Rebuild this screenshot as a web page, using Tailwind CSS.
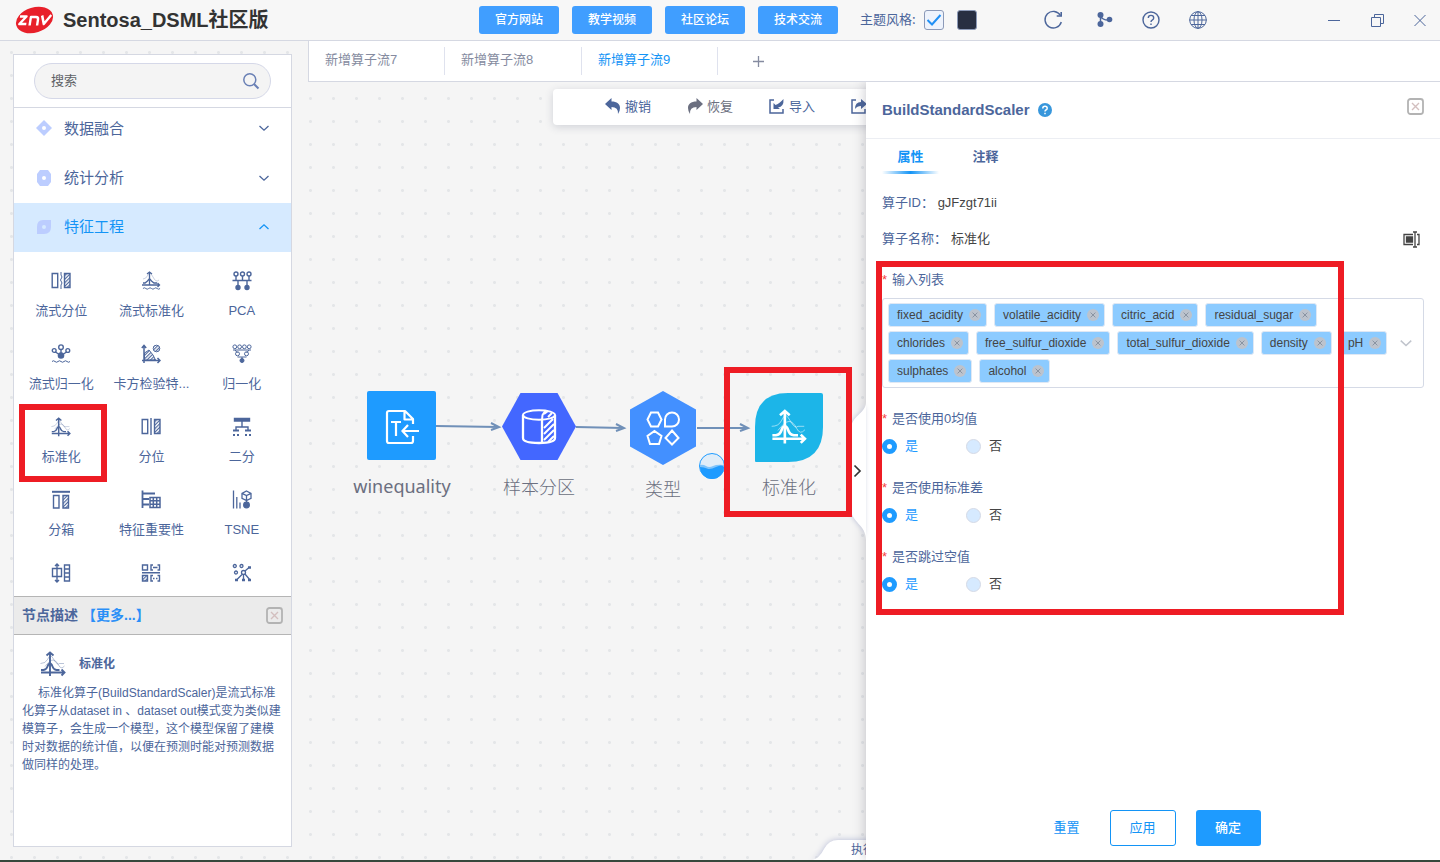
<!DOCTYPE html>
<html lang="zh-CN">
<head>
<meta charset="utf-8">
<meta name="viewport" content="width=device-width, initial-scale=1">
<title>Sentosa_DSML社区版</title>
<script src="https://cdn.jsdelivr.net/npm/@tailwindcss/browser@4"></script>
</head>
<body class="flex h-screen flex-col overflow-hidden bg-[#f5f5f5] font-['Liberation_Sans','Noto_Sans_CJK_SC',sans-serif] text-[13px] text-[#4c669b]">

<svg class="absolute size-0" aria-hidden="true">
  <defs>
    <pattern id="hatch" width="2.500" height="2.500" patternUnits="userSpaceOnUse" patternTransform="rotate(45)"><path d="M0 0V3" stroke="#4c669b" stroke-width="2.200"/></pattern>
    <symbol id="bell" viewBox="0 0 26 26">
      <path d="M1 21.500H24M21.500 18.500l3 3-3 3M10 25V2M6.500 4.500 10 1.500l3.500 3" fill="none" stroke="currentColor" stroke-width="1.900"/>
      <path d="M1 19h2.500Q6.500 18.500 7.500 15.500T10 12.500t2.500 3 4 3.500h3" fill="none" stroke="currentColor" stroke-width="1.900"/>
      <path d="M.5 12.500q5 0 7-4T10.500 4.500t4 5 5 3h4.500M5 15.500Q10 9 13 9t5.500 5 6 1" fill="none" stroke="currentColor" stroke-width=".6" opacity=".65"/>
    </symbol>
    <symbol id="close-box" viewBox="0 0 17 17">
      <rect x="1" y="1" width="15" height="15" rx="2.500" fill="none" stroke="#b3b3b3" stroke-width="1.800"/>
      <path d="m5 5 7 7m0-7-7 7" stroke="#d3bfbf" stroke-width="1.400"/>
    </symbol>
    <symbol id="chev" viewBox="0 0 12 12"><path d="m1.500 4 4.500 4.200L10.500 4" fill="none" stroke="currentColor" stroke-width="1.300"/></symbol>
    <symbol id="tagx" viewBox="0 0 12 12"><circle cx="6" cy="6" r="6" fill="#bcc3cd"/><path d="m3.600 3.600 4.800 4.800m0-4.800L3.600 8.400" stroke="#8a94a2" stroke-width="1"/></symbol>
    <symbol id="waves" viewBox="0 0 20 3"><path d="M1 1.500q1.500-1.500 3 0t3 0 3 0 3 0 3 0 3 0" fill="none" stroke="currentColor" stroke-width="1"/></symbol>
  </defs>
</svg>

<header class="flex h-[41px] shrink-0 items-center border-b border-[#d5d8e2] bg-[#f7f7f7]">
  <div class="flex w-[479px] items-center gap-[9px] pl-[14px]">
    <svg class="h-7 w-10" viewBox="0 0 40 28" role="img" aria-label="znv">
      <ellipse cx="20.500" cy="14" rx="19" ry="12.500" transform="rotate(-17 20.500 14)" fill="#e8202a"/>
      <g fill="none" stroke="#fff" stroke-width="2.400" stroke-linejoin="round" transform="translate(1 1) skewX(-9)">
        <path d="M6.500 9.500h6.500l-6 7.500h7"/><path d="M17.500 18.500V10h5q2.500 0 2.500 2.500v6"/><path d="m28.500 8.500 3 8.500 6-9"/>
      </g>
    </svg>
    <h1 class="text-xl font-bold whitespace-nowrap text-[#333]">Sentosa_DSML社区版</h1>
  </div>
  <nav class="flex gap-[13px] text-xs font-medium text-white">
    <a href="#" class="flex h-7 w-20 items-center justify-center rounded-[3px] bg-[#409eff]">官方网站</a>
    <a href="#" class="flex h-7 w-20 items-center justify-center rounded-[3px] bg-[#409eff]">教学视频</a>
    <a href="#" class="flex h-7 w-20 items-center justify-center rounded-[3px] bg-[#409eff]">社区论坛</a>
    <a href="#" class="flex h-7 w-20 items-center justify-center rounded-[3px] bg-[#409eff]">技术交流</a>
  </nav>
  <div class="ml-[22px] flex items-center">
    <label for="theme-light" class="pb-0.5 font-['Noto_Sans_CJK_SC']">主题风格:</label>
    <span class="relative ml-2 size-5">
      <input id="theme-light" type="checkbox" checked class="size-5 appearance-none rounded-[3px] border border-[#8c9ab8] bg-[#eef3fc]">
      <svg class="pointer-events-none absolute inset-0 size-5" viewBox="0 0 20 20"><path d="m3.500 10 4.500 4.500 8.500-9.500" fill="none" stroke="#2090f5" stroke-width="2"/></svg>
    </span>
    <button type="button" aria-label="深色主题" class="ml-[13px] size-5 rounded-[3px] border border-[#8c9ab8] bg-[#282f42]"></button>
  </div>
  <div class="ml-[66px] flex items-center gap-[27px]">
    <button type="button" aria-label="刷新"><svg class="size-5" viewBox="0 0 20 20" fill="none" stroke="currentColor" stroke-width="1.400"><path d="M17.500 5.500A8.300 8.300 0 1 0 18.300 12"/><path d="M18.200 2v4h-4.500" stroke-width="1.600"/></svg></button>
    <button type="button" aria-label="分支" class="ml-1"><svg class="size-5" viewBox="0 0 20 20"><path d="M6.500 4.500v11M6.500 6q2 4.500 9 4" fill="none" stroke="currentColor" stroke-width="1.500"/><circle cx="6.500" cy="5" r="3" fill="currentColor"/><circle cx="6.500" cy="14" r="3" fill="currentColor"/><circle cx="15.500" cy="9.500" r="2.800" fill="currentColor"/></svg></button>
    <button type="button" aria-label="帮助"><svg class="size-5" viewBox="0 0 20 20" fill="none" stroke="currentColor" stroke-width="1.400"><circle cx="10" cy="10" r="8"/><path d="M7.300 8q0-2.600 2.700-2.600T12.700 8q0 1.400-1.500 2.100-1.200.6-1.200 2"/><path d="M10 13.400v1.500"/></svg></button>
    <button type="button" aria-label="语言"><svg class="size-5" viewBox="0 0 20 20" fill="none" stroke="currentColor" stroke-width="1"><circle cx="10" cy="10" r="8.300"/><ellipse cx="10" cy="10" rx="4" ry="8.300"/><path d="M10 1.500v17M1.500 10h17M3 5.500h14M3 14.500h14"/></svg></button>
  </div>
  <div class="ml-auto flex items-center gap-[27px] pr-3">
    <button type="button" aria-label="最小化"><svg class="size-4" viewBox="0 0 16 16"><path d="M2 8.500h12" stroke="currentColor" stroke-width="1"/></svg></button>
    <button type="button" aria-label="还原"><svg class="size-4" viewBox="0 0 16 16" fill="none" stroke="currentColor" stroke-width="1"><path d="M2.500 5.500h9v9h-9zM5.500 5.500v-3h9v9h-3"/></svg></button>
    <button type="button" aria-label="关闭"><svg class="size-4" viewBox="0 0 16 16"><path d="m2.500 3 11 11m0-11-11 11" stroke="currentColor" stroke-width="1"/></svg></button>
  </div>
</header>

<div class="flex min-h-0 flex-1 bg-[radial-gradient(circle,#e4e6e8_1px,transparent_2px)] bg-[length:23px_23px]">

  <aside class="flex w-[308px] shrink-0 flex-col py-[13px] pr-4 pl-[13px]">
    <div class="flex min-h-0 flex-1 flex-col border border-[#d5d8e2] bg-white">
      <div class="shrink-0 border-b border-[#d5d8e2] px-5 py-2">
        <div class="flex h-9 items-center rounded-full border border-[#d5d8e8] bg-[#f4f4f4] pr-[10px] pl-4">
          <input type="text" aria-label="搜索" placeholder="搜索" class="min-w-0 flex-1 bg-transparent outline-none placeholder:text-[#606266]">
          <svg class="size-[18px] text-[#6a80b5]" viewBox="0 0 18 18" fill="none" stroke="currentColor" stroke-width="1.500"><circle cx="7.800" cy="7.800" r="6"/><path d="m12 12 4.500 4.500" stroke-width="2"/></svg>
        </div>
      </div>

      <div class="flex min-h-0 flex-1 flex-col overflow-hidden">
        <button type="button" class="flex h-[46px] shrink-0 items-center gap-3 pr-[21px] pb-[6px] pl-[22px] text-[15px] font-['Noto_Sans_CJK_SC']">
          <svg class="size-4" viewBox="0 0 16 16"><path fill-rule="evenodd" d="M8 0l8 8-8 8-8-8zM8 6a2 2 0 1 0 0 4 2 2 0 0 0 0-4z" fill="#bccdff"/></svg>
          <span class="flex-1 text-left">数据融合</span><svg class="size-3"><use href="#chev"/></svg>
        </button>
        <button type="button" class="flex h-[49px] shrink-0 items-center gap-3 pr-[21px] pb-[2px] pl-[22px] text-[15px] font-['Noto_Sans_CJK_SC']">
          <svg class="size-4" viewBox="0 0 16 16"><path fill-rule="evenodd" d="M4 0h8l3 4v8l-3 4H4l-3-4V4zM8 6a2 2 0 1 0 0 4 2 2 0 0 0 0-4z" fill="#bccdff"/></svg>
          <span class="flex-1 text-left">统计分析</span><svg class="size-3"><use href="#chev"/></svg>
        </button>
        <button type="button" class="flex h-[49px] shrink-0 items-center gap-3 bg-[#d6eaff] pr-[21px] pb-[2px] pl-[22px] text-[15px] font-['Noto_Sans_CJK_SC'] text-[#1394f6]">
          <svg class="size-4" viewBox="0 0 16 16"><path fill-rule="evenodd" d="M7 1h8v7q0 7-7 7H1V8q0-7 6-7zM8 6a2 2 0 1 0 0 4 2 2 0 0 0 0-4z" fill="#bccdff"/></svg>
          <span class="flex-1 text-left">特征工程</span><svg class="size-3 rotate-180"><use href="#chev"/></svg>
        </button>

        <ul class="grid grid-cols-3 pt-[9px] pr-1 pl-[2px] text-[13px] leading-5">
          <li class="flex h-[73px] flex-col items-center gap-[10px] pt-[10px]">
            <svg class="size-5" viewBox="0 0 20 20" fill="none" stroke="currentColor" stroke-width="1.400"><path d="M1.200 2.500h5.500v14H1.200z"/><path d="M13.500 2.500h5.500v14h-5.500z" fill="url(#hatch)"/><path d="M10 1v3l1 2-1.500 3 1.500 3-1 2v4" stroke-width="1"/></svg>流式分位</li>
          <li class="flex h-[73px] flex-col items-center gap-[10px] pt-[10px]">
            <svg class="size-5" viewBox="0 0 20 20" fill="none" stroke="currentColor" stroke-width="1.300"><path d="M8.500 14V1M6 3l2.500-2L11 3M1 14h17.500M16.500 12l2 2-2 2M2 12h2l2.500-2 2-2.500 2 2.500 2.500 2h3"/><path d="M2 8q3 0 5-4t5 2 6 3" stroke-width=".5" opacity=".6"/><use href="#waves" x="1" y="16" width="19" height="3"/></svg>流式标准化</li>
          <li class="flex h-[73px] flex-col items-center gap-[10px] pt-[10px]">
            <svg class="size-5" viewBox="0 0 20 20" fill="none" stroke="currentColor" stroke-width="1.400"><circle cx="4" cy="3" r="2"/><circle cx="10.500" cy="3" r="2"/><circle cx="17" cy="3" r="2"/><path d="M4 5v4M10.500 5v4M17 5v4M.5 9.500h19M6 10v5M15 10v5"/><g fill="currentColor"><circle cx="6" cy="16.500" r="2"/><circle cx="15" cy="16.500" r="2"/></g></svg>PCA</li>

          <li class="flex h-[73px] flex-col items-center gap-[10px] pt-[10px]">
            <svg class="size-5" viewBox="0 0 20 20" fill="none" stroke="currentColor" stroke-width="1.400"><circle cx="10" cy="3.200" r="2.300"/><circle cx="3.200" cy="6.500" r="1.900"/><circle cx="16.800" cy="6.500" r="1.900"/><path d="M10 5.500v5M4.500 8l3 2M15.500 8l-3 2"/><circle cx="10" cy="11.500" r="2.600" fill="currentColor"/><use href="#waves" x="0" y="16" width="20" height="3"/></svg>流式归一化</li>
          <li class="flex h-[73px] flex-col items-center gap-[10px] pt-[10px]">
            <svg class="size-5" viewBox="0 0 20 20" fill="none" stroke="currentColor" stroke-width="1.500"><path d="M3 19V1.500M.8 4 3 1.500 5.200 4M1 16.500h18M16.500 14l2.500 2.500-2.500 2.500"/><path d="M3.500 16V9L8 6l4 5 2.500 5z" stroke-width="1" fill="url(#hatch)"/><circle cx="15.500" cy="4.500" r="3.300" stroke-width="1" fill="url(#hatch)"/></svg>卡方检验特...</li>
          <li class="flex h-[73px] flex-col items-center gap-[10px] pt-[10px]">
            <svg class="size-5" viewBox="0 0 20 20" fill="none" stroke="currentColor" stroke-width="1"><circle cx="2.800" cy="2.800" r="1.900"/><circle cx="7.600" cy="2.800" r="1.900"/><circle cx="12.400" cy="2.800" r="1.900"/><circle cx="17.200" cy="2.800" r="1.900"/><path d="M1 6h18M3 6l2.500 3M17 6l-2.500 3M5.500 13h9M10 13v2"/><circle cx="5.500" cy="9.800" r="2"/><circle cx="14.500" cy="9.800" r="2"/><circle cx="10" cy="16.500" r="2" fill="currentColor"/></svg>归一化</li>

          <li class="relative flex h-[73px] flex-col items-center gap-[10px] pt-[10px]">
            <svg class="size-5"><use href="#bell"/></svg>标准化
            <span class="pointer-events-none absolute -top-[3px] left-[3px] h-[78px] w-[88px] border-[6px] border-[#ee1c24]"></span></li>
          <li class="flex h-[73px] flex-col items-center gap-[10px] pt-[10px]">
            <svg class="size-5" viewBox="0 0 20 20" fill="none" stroke="currentColor" stroke-width="1.400"><path d="M1.200 2.500h5.500v14H1.200z"/><path d="M13.500 2.500h5.500v14h-5.500z" fill="url(#hatch)"/><path d="M10 1v17"/></svg>分位</li>
          <li class="flex h-[73px] flex-col items-center gap-[10px] pt-[10px]">
            <svg class="size-5" viewBox="0 0 20 20" fill="none" stroke="currentColor" stroke-width="1.400"><path d="M2.500 1.500h15v2.500h-15z" fill="currentColor"/><path d="M10 4v6M4 13V10h12v3"/><path d="M1 13.500h6M13 13.500h6" stroke-width="2.200"/><path d="M1 18h2M5 18h2M13 18h2M17 18h2" stroke-width="2"/></svg>二分</li>

          <li class="flex h-[73px] flex-col items-center gap-[10px] pt-[10px]">
            <svg class="size-5" viewBox="0 0 20 20" fill="none" stroke="currentColor" stroke-width="1.400"><path d="M1 1.800h18" stroke-width="2"/><path d="M2.500 5.500h5.500v12.500H2.500z"/><path d="M12 5.500h5.500v12.500H12z" fill="url(#hatch)"/></svg>分箱</li>
          <li class="flex h-[73px] flex-col items-center gap-[10px] pt-[10px]">
            <svg class="size-5" viewBox="0 0 20 20" fill="none" stroke="currentColor" stroke-width="1.500"><path d="M1.500.5v17.500M1.500 3.500H14M1.500 9H8M1.500 14.500H8" stroke-width="1.800"/><path d="M9 7.500h10v10H9zM12.300 7.500v10M15.700 7.500v10M9 10.800h10M9 14.200h10"/></svg>特征重要性</li>
          <li class="flex h-[73px] flex-col items-center gap-[10px] pt-[10px]">
            <svg class="size-5" viewBox="0 0 20 20" fill="none" stroke="currentColor" stroke-width="1.300"><path d="M1.500.5v18M4.800 7v11.500M8 12.500v6"/><path d="m14.500 1 4.500 2.300v5L14.500 10.500 10 8.300v-5zM10 3.300l4.500 2.300L19 3.300M14.500 5.600v7"/><circle cx="14.500" cy="15" r="2.800" fill="currentColor"/></svg>TSNE</li>

          <li class="flex h-[73px] flex-col items-center gap-[10px] pt-[10px]">
            <svg class="size-5" viewBox="0 0 20 20" fill="none" stroke="currentColor" stroke-width="1.400"><path d="M1.500 5.500h9v8h-9zM6 1v18M4 3l2-2 2 2M4 17l2 2 2-2M13.500 2h5v16h-5zM13.500 6h5M13.500 10h5M13.500 14h5"/></svg></li>
          <li class="flex h-[73px] flex-col items-center gap-[10px] pt-[10px]">
            <svg class="size-5" viewBox="0 0 20 20" fill="none" stroke="currentColor" stroke-width="1.400"><path d="M1.500 2h5v5h-5zM1 9.700h18M12 2h-2v5h2M16.500 2h2v5h-2M12 4.500h4.500M12 12.500h-2V18h2M16.500 12.500h2V18h-2M12 15.500h1.500M15 15.500h1.500"/><path d="M1.500 12.500h5V18h-5z" fill="url(#hatch)"/></svg></li>
          <li class="flex h-[73px] flex-col items-center gap-[10px] pt-[10px]">
            <svg class="size-5" viewBox="0 0 20 20" fill="none" stroke="currentColor" stroke-width="1.300"><circle cx="2.800" cy="3" r="1.500"/><circle cx="9.500" cy="3" r="1.500"/><circle cx="4" cy="9.500" r="1.500"/><circle cx="11.500" cy="9.500" r="2"/><path d="m13 8 4-3.500M10 11.500 5 16.500M11.500 11.500v5M13 11l5 6"/><path d="M16 4.500h3M3 17h3M10 17h3M16 17h3" stroke-width="2.400"/></svg></li>
        </ul>
      </div>

      <section class="shrink-0">
        <div class="flex h-[39px] items-center border-y border-[#b5b5b5] bg-[#ebebeb] pr-2 pl-2 text-sm font-bold">
          <h2 class="pb-[2px]">节点描述</h2><a href="#" class="ml-1 pb-[2px] text-[#2a8ff7]">【更多...】</a>
          <button type="button" aria-label="关闭描述" class="ml-auto"><svg class="size-[17px]"><use href="#close-box"/></svg></button>
        </div>
        <div class="h-[211px] px-2 pt-4">
          <h3 class="flex items-center gap-[13px] pl-[18px] text-xs font-bold"><svg class="size-[26px]"><use href="#bell"/></svg>标准化</h3>
          <p class="mt-[7px] indent-4 text-xs leading-[18px]">标准化算子(BuildStandardScaler)是流式标准化算子从dataset in 、dataset out模式变为类似建模算子，会生成一个模型，这个模型保留了建模时对数据的统计值，以便在预测时能对预测数据做同样的处理。</p>
        </div>
      </section>
    </div>
  </aside>

  <main class="flex min-w-0 flex-1 flex-col">
    <div role="tablist" class="flex h-[41px] shrink-0 items-center border-b border-l border-[#d5d8e2] bg-white text-[#858ba0]">
      <button type="button" role="tab" class="h-7 w-[136px] border-r border-[#dfe2ee] pl-4 text-left"><span class="block pb-[2px]">新增算子流7</span></button>
      <button type="button" role="tab" class="h-7 w-[137px] border-r border-[#dfe2ee] pl-4 text-left"><span class="block pb-[2px]">新增算子流8</span></button>
      <button type="button" role="tab" aria-selected="true" class="h-7 w-[136px] border-r border-[#dfe2ee] pl-4 text-left text-[#1394f6]"><span class="block pb-[2px]">新增算子流9</span></button>
      <button type="button" aria-label="新增" class="ml-[34px]"><svg class="size-3" viewBox="0 0 12 12"><path d="M6.500 1v11M1 6.500h11" stroke="#858ba0" stroke-width="1.300"/></svg></button>
    </div>

    <div class="relative min-h-0 flex-1 overflow-hidden">
      <!-- flow canvas: edges, then nodes -->
      <svg class="absolute inset-0 size-full" fill="none" stroke="#7090b8" stroke-width="2">
        <path d="M128 344 190 345M183 341l8 4-8 3M268 345l47 1M308 342l8 4-8 3M389 346h50M432 342l8 4-8 3"/>
      </svg>
      <div class="absolute top-[309px] left-[34px] flex w-[120px] flex-col items-center font-['Noto_Sans'] text-lg text-[#6b6f80]">
        <svg class="h-[70px] w-[70px]" viewBox="0 0 70 70" fill="none" stroke="#fff" stroke-width="2.200"><rect width="69" height="69" x="0" y="0" rx="2" fill="#1e9bff" stroke="none"/><path d="M46 45v5q0 2-2 2H22q-2 0-2-2V22q0-2 2-2h16l8 8v5M37.500 20v8.500H46" stroke-linejoin="round"/><path d="M24 31h10M29 31v14M35 40h17M41 34l-5.500 6 5.500 6"/></svg>
        <span class="mt-[11px]">winequality</span>
      </div>
      <div class="absolute top-[309px] left-[171px] flex w-[120px] flex-col items-center font-['Noto_Sans_CJK_SC'] text-lg font-light text-[#6b6f80]">
        <svg class="h-[70px] w-[74px]" viewBox="0 0 74 70" fill="none" stroke="#fff" stroke-width="2"><path d="M18.500 2h37L74 35.500 55.500 69h-37L0 35.500z" fill="#4367ff" stroke="none"/><path d="M21 24v23q0 5 16 5t16-5V24M40 29v23" stroke-width="2.300"/><ellipse cx="37" cy="24" rx="16" ry="4.800"/><path d="m40 29 .5-5 3-4.500M42 23l4-3M46 26l4-4M42 37l9-9M42 43l10-10M42 49l10-10M46 51l6-6"/></svg>
        <span class="mt-[11px]">样本分区</span>
      </div>
      <div class="absolute top-[309px] left-[295px] flex w-[120px] flex-col items-center font-['Noto_Sans_CJK_SC'] text-lg font-light text-[#6b6f80]">
        <svg class="h-[74px] w-[68px]" viewBox="0 0 68 74" fill="none" stroke="#fff" stroke-width="2"><path d="m34 0 33 18.500v37L34 74 1 55.500v-37z" fill="#4390ff" stroke="none"/><path d="m18.500 28.500 3.500-7h7l3.500 7-3.500 7h-7zM25.500 40l7 5-2.500 8h-9l-2.500-8zM43 39.500l6.500 7.500-6.500 6.500-6.500-6.500zM36 35.500v-7a7 7 0 1 1 7 7z"/></svg>
        <span class="mt-[9px]">类型</span>
      </div>
      <svg class="absolute top-[371px] left-[391px] size-[26px]" viewBox="0 0 26 26"><circle cx="13" cy="13" r="12.500" fill="#e0edf8" stroke="#1e9bff"/><path d="M1 12q3-1 6 1t7 0 11-1v1a12 12 0 0 1-24 0z" fill="#7fc4fb"/><path d="M1 14q4 0 7 1.500t9-1.500 8 0a12 12 0 0 1-24 0z" fill="#1e9bff"/></svg>
      <div class="absolute top-[311px] left-[421px] flex w-[120px] flex-col items-center font-['Noto_Sans_CJK_SC'] text-lg font-light text-[#6b6f80]">
        <svg class="h-[70px] w-[70px]" viewBox="0 0 70 70" color="#fff"><path d="M34 0h33q2 0 2 2v32q0 35-35 35H2q-1 0-1-1V34Q1 0 34 0z" fill="#1cb5e8"/><use href="#bell" x="17" y="16" width="36" height="36"/></svg>
        <span class="mt-[9px]">标准化</span>
      </div>

      <!-- toolbar over the canvas -->
      <div class="absolute top-[7px] right-0 left-[245px] flex h-9 items-center gap-9 rounded bg-white pb-[2px] pl-[52px] font-['Noto_Sans_CJK_SC'] shadow-[0_2px_8px_rgba(60,70,100,0.2)]">
        <button type="button" class="flex items-center gap-1"><svg class="size-4" viewBox="0 0 16 16" fill="currentColor"><path d="M6.500 0v3.500C12 3.500 15 6 15 10q0 3-2 6 .5-7-6.500-7V12L0 6z"/></svg>撤销</button>
        <button type="button" class="flex items-center gap-1 text-[#6b6f80]"><svg class="size-4 -scale-x-100" viewBox="0 0 16 16" fill="currentColor"><path d="M6.500 0v3.500C12 3.500 15 6 15 10q0 3-2 6 .5-7-6.500-7V12L0 6z"/></svg>恢复</button>
        <button type="button" class="flex items-center gap-1"><svg class="size-4" viewBox="0 0 16 16"><path d="M5 2H1v13h13v-4" fill="none" stroke="currentColor" stroke-width="1.500"/><path d="M4.500 11V5l2 2Q10 6 14.500 1 15 9 9 9.500l2 1.500z" fill="currentColor"/></svg>导入</button>
        <button type="button" aria-label="导出"><svg class="size-4" viewBox="0 0 16 16"><path d="M5 2H1v13h13v-4" fill="none" stroke="currentColor" stroke-width="1.500"/><path d="M10 1v3Q4 4 4 11q2-3 6-3v3l6-5z" fill="currentColor"/></svg></button>
      </div>

      <!-- execution panel tab -->
      <div class="absolute bottom-0 left-[500px] h-[21px] w-[100px]">
        <svg class="absolute inset-0 overflow-visible drop-shadow-[0_0_3px_#b5bad5]" width="100" height="21"><path d="M4 21Q11 20 16 10T32 1H100V21z" fill="#fff"/></svg>
        <span class="absolute top-[3px] left-[43px] text-xs whitespace-nowrap">执行</span>
      </div>

      <!-- property drawer -->
      <section class="absolute inset-y-0 right-0 flex w-[574px] flex-col bg-white shadow-[0_0_12px_rgba(60,60,80,0.3)]">
        <button type="button" aria-label="收起" class="absolute top-[320px] -left-4 h-[138px] w-4">
          <svg class="absolute inset-0 h-[138px] w-4 overflow-visible drop-shadow-[-1px_0_2px_#c5cadc]" viewBox="0 0 16 138"><path d="M16 0C16 12 1 13 1 28V106C1 121 16 122 16 138z" fill="#fff"/></svg>
          <svg class="absolute top-[62px] left-[3px] h-[14px] w-[9px]" viewBox="0 0 9 14"><path d="m1.500 1.500 5.500 5.500-5.500 5.500" fill="none" stroke="#333" stroke-width="1.700"/></svg>
        </button>

        <div class="relative flex h-[57px] shrink-0 items-center gap-2 border-b border-[#eceef3] bg-white px-4">
          <h2 class="text-[15px] font-bold">BuildStandardScaler</h2>
          <button type="button" aria-label="帮助"><svg class="size-[14px]" viewBox="0 0 14 14"><circle cx="7" cy="7" r="7" fill="#3897dc"/><path d="M4.800 5.400q0-2.100 2.200-2.100t2.200 1.900q0 1.200-1.300 1.800Q7 7.500 7 8.500M7 9.700v1.600" fill="none" stroke="#fff" stroke-width="1.500"/></svg></button>
          <button type="button" aria-label="关闭" class="mb-[7px] ml-auto"><svg class="size-[17px]"><use href="#close-box"/></svg></button>
        </div>

        <div role="tablist" class="flex h-[35px] shrink-0 gap-[18px] bg-white pl-4 font-['Noto_Sans_CJK_SC'] font-bold">
          <button type="button" role="tab" aria-selected="true" class="flex w-[57px] flex-col items-center justify-between pt-[7px] text-[#1394f6]"><span>属性</span><span class="h-[3px] w-full bg-linear-to-r from-transparent via-[#1394f6] to-transparent"></span></button>
          <button type="button" role="tab" class="flex w-[57px] items-start justify-center pt-[7px]">注释</button>
        </div>

        <form class="min-h-0 flex-1 overflow-hidden bg-white px-4 pt-[19px] leading-5">
          <p>算子ID： <span class="text-[#444]">gJFzgt71ii</span></p>
          <div class="mt-4 flex h-5 items-center justify-between pr-1">
            <p>算子名称：<span class="ml-1 text-[#444]">标准化</span></p>
            <button type="button" aria-label="重命名"><svg class="size-[17px] text-[#444]" viewBox="0 0 17 17" fill="none" stroke="currentColor" stroke-width="1.300"><path d="M10 3.500H1v10h9M14 3.500h2v10h-2M12 1v15M10 1h4M10 16h4"/><path d="M3.500 6h6v5h-6z" fill="currentColor"/></svg></button>
          </div>

          <div class="relative mt-5">
            <p class="flex items-center pt-px"><span class="w-[10px] text-[#f34141]">*</span>输入列表</p>
            <div class="mt-2 flex items-center rounded-[3px] border border-[#d5dae6] py-1 pl-[5px]">
              <ul class="flex min-w-0 flex-1 flex-wrap gap-x-[7px] gap-y-1 text-xs text-[#444]">
                <li class="flex h-6 items-center gap-[6px] rounded-[3px] border border-[#dfe8f4] bg-[#8ccbff] pr-[5px] pl-2">fixed_acidity<button type="button" aria-label="移除 fixed_acidity"><svg class="size-3"><use href="#tagx"/></svg></button></li>
                <li class="flex h-6 items-center gap-[6px] rounded-[3px] border border-[#dfe8f4] bg-[#8ccbff] pr-[5px] pl-2">volatile_acidity<button type="button" aria-label="移除 volatile_acidity"><svg class="size-3"><use href="#tagx"/></svg></button></li>
                <li class="flex h-6 items-center gap-[6px] rounded-[3px] border border-[#dfe8f4] bg-[#8ccbff] pr-[5px] pl-2">citric_acid<button type="button" aria-label="移除 citric_acid"><svg class="size-3"><use href="#tagx"/></svg></button></li>
                <li class="flex h-6 items-center gap-[6px] rounded-[3px] border border-[#dfe8f4] bg-[#8ccbff] pr-[5px] pl-2">residual_sugar<button type="button" aria-label="移除 residual_sugar"><svg class="size-3"><use href="#tagx"/></svg></button></li>
                <li class="flex h-6 items-center gap-[6px] rounded-[3px] border border-[#dfe8f4] bg-[#8ccbff] pr-[5px] pl-2">chlorides<button type="button" aria-label="移除 chlorides"><svg class="size-3"><use href="#tagx"/></svg></button></li>
                <li class="flex h-6 items-center gap-[6px] rounded-[3px] border border-[#dfe8f4] bg-[#8ccbff] pr-[5px] pl-2">free_sulfur_dioxide<button type="button" aria-label="移除 free_sulfur_dioxide"><svg class="size-3"><use href="#tagx"/></svg></button></li>
                <li class="flex h-6 items-center gap-[6px] rounded-[3px] border border-[#dfe8f4] bg-[#8ccbff] pr-[5px] pl-2">total_sulfur_dioxide<button type="button" aria-label="移除 total_sulfur_dioxide"><svg class="size-3"><use href="#tagx"/></svg></button></li>
                <li class="flex h-6 items-center gap-[6px] rounded-[3px] border border-[#dfe8f4] bg-[#8ccbff] pr-[5px] pl-2">density<button type="button" aria-label="移除 density"><svg class="size-3"><use href="#tagx"/></svg></button></li>
                <li class="flex h-6 items-center gap-[6px] rounded-[3px] border border-[#dfe8f4] bg-[#8ccbff] pr-[5px] pl-2">pH<button type="button" aria-label="移除 pH"><svg class="size-3"><use href="#tagx"/></svg></button></li>
                <li class="flex h-6 items-center gap-[6px] rounded-[3px] border border-[#dfe8f4] bg-[#8ccbff] pr-[5px] pl-2">sulphates<button type="button" aria-label="移除 sulphates"><svg class="size-3"><use href="#tagx"/></svg></button></li>
                <li class="flex h-6 items-center gap-[6px] rounded-[3px] border border-[#dfe8f4] bg-[#8ccbff] pr-[5px] pl-2">alcohol<button type="button" aria-label="移除 alcohol"><svg class="size-3"><use href="#tagx"/></svg></button></li>
              </ul>
              <button type="button" aria-label="展开列表" class="pr-[10px] pl-1 text-[#c0c4cc]"><svg class="size-[14px]"><use href="#chev"/></svg></button>
            </div>
            <span class="pointer-events-none absolute -top-2 -left-[6px] z-10 h-[354px] w-[468px] border-[6px] border-[#ee1c24]"></span>
          </div>

          <fieldset class="mt-5">
            <legend class="flex items-center pt-px"><span class="w-[10px] text-[#f34141]">*</span>是否使用0均值</legend>
            <div class="mt-[7px] flex">
              <label class="flex w-[84px] items-center gap-2 text-[#1e9bff]"><input type="radio" name="mean" checked class="size-[15px] appearance-none rounded-full border border-[#d5dae6] bg-[#d6eaff] checked:border-[5px] checked:border-[#1e9bff] checked:bg-white">是</label>
              <label class="flex items-center gap-2 text-[#444]"><input type="radio" name="mean" class="size-[15px] appearance-none rounded-full border border-[#d5dae6] bg-[#d6eaff] checked:border-[5px] checked:border-[#1e9bff] checked:bg-white">否</label>
            </div>
          </fieldset>
          <fieldset class="mt-[21px]">
            <legend class="flex items-center pt-px"><span class="w-[10px] text-[#f34141]">*</span>是否使用标准差</legend>
            <div class="mt-[7px] flex">
              <label class="flex w-[84px] items-center gap-2 text-[#1e9bff]"><input type="radio" name="std" checked class="size-[15px] appearance-none rounded-full border border-[#d5dae6] bg-[#d6eaff] checked:border-[5px] checked:border-[#1e9bff] checked:bg-white">是</label>
              <label class="flex items-center gap-2 text-[#444]"><input type="radio" name="std" class="size-[15px] appearance-none rounded-full border border-[#d5dae6] bg-[#d6eaff] checked:border-[5px] checked:border-[#1e9bff] checked:bg-white">否</label>
            </div>
          </fieldset>
          <fieldset class="mt-[21px]">
            <legend class="flex items-center pt-px"><span class="w-[10px] text-[#f34141]">*</span>是否跳过空值</legend>
            <div class="mt-[7px] flex">
              <label class="flex w-[84px] items-center gap-2 text-[#1e9bff]"><input type="radio" name="skip" checked class="size-[15px] appearance-none rounded-full border border-[#d5dae6] bg-[#d6eaff] checked:border-[5px] checked:border-[#1e9bff] checked:bg-white">是</label>
              <label class="flex items-center gap-2 text-[#444]"><input type="radio" name="skip" class="size-[15px] appearance-none rounded-full border border-[#d5dae6] bg-[#d6eaff] checked:border-[5px] checked:border-[#1e9bff] checked:bg-white">否</label>
            </div>
          </fieldset>
        </form>

        <footer class="flex shrink-0 justify-center gap-5 bg-white pr-[2px] pb-[14px] text-[#1394f6]">
          <button type="button" class="h-9 w-[46px]">重置</button>
          <button type="button" class="h-9 w-[66px] rounded-[3px] border border-[#1394f6]">应用</button>
          <button type="button" class="h-9 w-[65px] rounded-[3px] bg-[#1e9bff] font-medium text-white">确定</button>
        </footer>
      </section>
      <span class="pointer-events-none absolute top-[285px] left-[416px] h-[150px] w-[128px] border-[6px] border-[#ee1c24]"></span>
    </div>
  </main>
</div>
<div class="h-[2px] shrink-0 bg-[#36483c]"></div>
</body>
</html>
